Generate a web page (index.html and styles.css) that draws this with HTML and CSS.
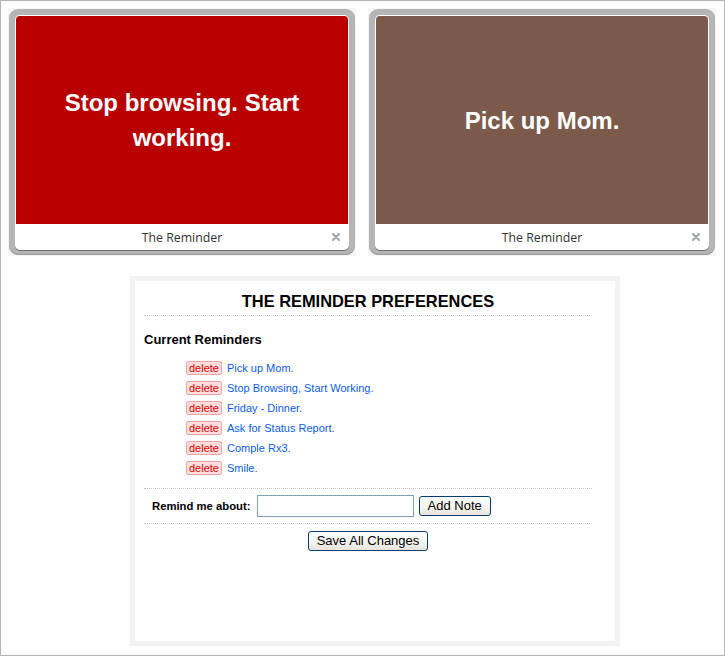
FILE: index.html
```html
<!DOCTYPE html>
<html>
<head>
<meta charset="utf-8">
<title>The Reminder Preferences</title>
<link rel="stylesheet" href="styles.css">
</head>
<body>
<div class="page">
  <div class="cards">
    <div class="card">
      <div class="frame">
        <div class="inner">
          <div class="msg msg-red">Stop browsing. Start working.</div>
          <div class="foot">
            <span class="foot-title">The Reminder</span>
            <svg class="close" width="8" height="8" viewBox="0 0 8 8"><path d="M1 1L7 7M7 1L1 7" stroke="#9aa0a6" stroke-width="1.9" stroke-linecap="round"/></svg>
          </div>
        </div>
      </div>
    </div>
    <div class="card">
      <div class="frame">
        <div class="inner">
          <div class="msg msg-brown">Pick up Mom.</div>
          <div class="foot">
            <span class="foot-title">The Reminder</span>
            <svg class="close" width="8" height="8" viewBox="0 0 8 8"><path d="M1 1L7 7M7 1L1 7" stroke="#9aa0a6" stroke-width="1.9" stroke-linecap="round"/></svg>
          </div>
        </div>
      </div>
    </div>
  </div>

  <div class="prefs">
    <div class="content">
      <h1 class="title">THE REMINDER PREFERENCES</h1>
      <h2 class="subtitle">Current Reminders</h2>
      <ul class="list">
        <li><span class="del">delete</span><a class="item" href="#">Pick up Mom.</a></li>
        <li><span class="del">delete</span><a class="item" href="#">Stop Browsing, Start Working.</a></li>
        <li><span class="del">delete</span><a class="item" href="#">Friday - Dinner.</a></li>
        <li><span class="del">delete</span><a class="item" href="#">Ask for Status Report.</a></li>
        <li><span class="del">delete</span><a class="item" href="#">Comple Rx3.</a></li>
        <li><span class="del">delete</span><a class="item" href="#">Smile.</a></li>
      </ul>
      <div class="add-row">
        <label class="add-label">Remind me about:</label>
        <input class="add-input" type="text">
        <button class="btn">Add Note</button>
      </div>
      <div class="save-row">
        <button class="btn">Save All Changes</button>
      </div>
    </div>
  </div>
</div>
</body>
</html>
```

FILE: styles.css
```css
html, body {
  margin: 0;
  padding: 0;
  background: #fff;
}

.page {
  box-sizing: border-box;
  width: 725px;
  height: 656px;
  border: 1px solid #b4b4b4;
  padding: 7px 8px 0 7px;
  font-family: "Liberation Sans", Arial, sans-serif;
}

.cards {
  display: flex;
  gap: 12px;
}

.card {
  width: 348px;
  height: 248px;
  box-sizing: border-box;
  background: #f5f5f5;
  padding: 1px;
}

.frame {
  height: 246px;
  box-sizing: border-box;
  background: #b5b5b5;
  border-radius: 9px;
  padding: 6px 6px 5px 6px;
  box-shadow: inset 0 -1px 1px #9a9a9a;
}

.inner {
  background: #fff;
  border-radius: 5px;
  padding: 1px 1px 0 1px;
  height: 235px;
  box-sizing: border-box;
  box-shadow: 0 1px 0 #707070;
  display: flex;
  flex-direction: column;
}

.msg {
  height: 208px;
  display: flex;
  align-items: center;
  justify-content: center;
  text-align: center;
  padding: 0 30px;
  box-sizing: border-box;
  color: #fff;
  font-weight: bold;
  font-size: 24px;
  line-height: 35px;
  border-radius: 4px 4px 0 0;
}

.msg-red {
  background: #b80000;
}

.msg-brown {
  background: #7c5a4b;
}

.foot {
  flex: 1;
  display: flex;
  align-items: center;
  justify-content: center;
  position: relative;
}

.foot-title {
  font-family: "Open Sans", "Noto Sans", sans-serif;
  font-size: 12.3px;
  color: #333;
  margin-top: 1px;
}

.close {
  position: absolute;
  right: 8px;
  top: 9px;
}

.prefs {
  margin: 20px 0 0 122px;
  width: 490px;
  height: 370px;
  box-sizing: border-box;
  border: 5px solid #f2f2f2;
  background: #fff;
}

.content {
  width: 448px;
  margin-left: 9px;
  padding-top: 10px;
}

.title {
  margin: 0;
  font-size: 16.4px;
  line-height: 20px;
  font-weight: bold;
  text-align: center;
  color: #000;
  padding-bottom: 4px;
  border-bottom: 1px dotted #c8c8c8;
}

.subtitle {
  margin: 16px 0 0 0;
  font-size: 13px;
  line-height: 16px;
  font-weight: bold;
  color: #000;
}

.list {
  list-style: none;
  margin: 10px 0 0 0;
  padding: 0 0 0 42px;
}

.list li {
  height: 20px;
  display: flex;
  align-items: center;
  font-size: 11px;
}

.del {
  display: inline-block;
  height: 12px;
  line-height: 12px;
  padding: 0 2px;
  border: 1px solid #f3a3a3;
  border-radius: 2px;
  background: #ffdede;
  color: #e00000;
  font-size: 11px;
  margin-right: 5px;
}

.item {
  color: #0a5cf5;
  text-decoration: none;
  font-size: 11px;
}

.add-row {
  margin-top: 10px;
  border-top: 1px dotted #c8c8c8;
  border-bottom: 1px dotted #c8c8c8;
  padding: 6px 0 6px 8px;
  display: flex;
  align-items: center;
}

.add-label {
  font-size: 11.3px;
  font-weight: bold;
  color: #000;
  margin-right: 6px;
}

.add-input {
  box-sizing: border-box;
  width: 157px;
  height: 22px;
  border: 1px solid #7f9db9;
  margin: 0 5px 0 0;
  padding: 1px 3px;
  font-size: 12px;
}

.btn {
  box-sizing: border-box;
  height: 20px;
  padding: 0 8px;
  font-family: "Liberation Sans", Arial, sans-serif;
  font-size: 13px;
  color: #000;
  border: 1px solid #003c74;
  border-radius: 3px;
  background: linear-gradient(#ffffff, #f4f3ee 60%, #e6e4da);
  line-height: 16px;
}

.save-row {
  text-align: center;
  padding-top: 7px;
}
```
